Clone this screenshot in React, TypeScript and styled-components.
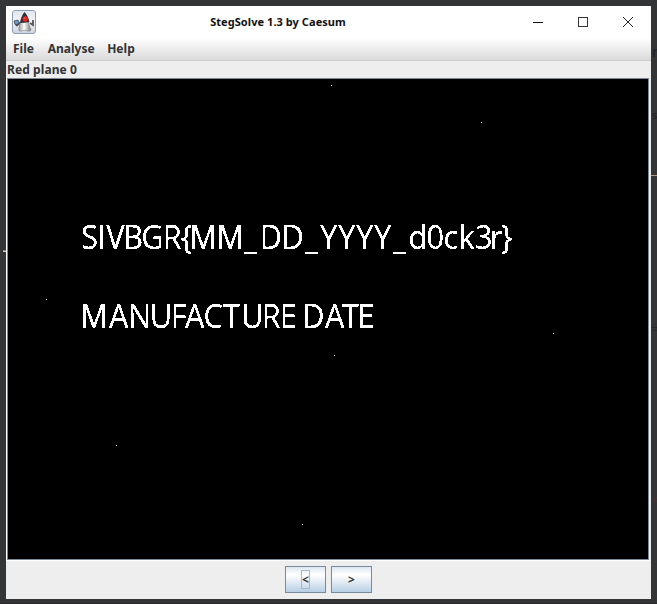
import React from "react";
import styled, { createGlobalStyle } from "styled-components";

const GlobalStyle = createGlobalStyle`
  body { margin: 0; background: #343537; }
  * { box-sizing: border-box; }
`;

const Desktop = styled.div`
  position: relative;
  width: 657px;
  height: 604px;
  padding: 6px 6px 5px;
  overflow: hidden;
  background: linear-gradient(#343537 0 603px, #29292c 603px);
`;

const BackdropMark = styled.span<{ $x: number; $y: number; $w: number; $color: string }>`
  position: absolute;
  left: ${(p) => p.$x}px;
  top: ${(p) => p.$y}px;
  width: ${(p) => p.$w}px;
  height: 1px;
  background: ${(p) => p.$color};
`;

const BackdropText = styled.span<{ $y: number; $size: number; $color: string }>`
  position: absolute;
  left: 652px;
  top: ${(p) => p.$y}px;
  font: ${(p) => p.$size}px/1 "Noto Sans", sans-serif;
  color: ${(p) => p.$color};
`;

const Window = styled.div`
  display: flex;
  flex-direction: column;
  width: 645px;
  height: 593px;
  background: #eee;
  font-family: "Noto Sans", sans-serif;
`;

const TitleBar = styled.header`
  display: grid;
  grid-template-columns: 24px 1fr 136px;
  align-items: center;
  height: 32px;
  padding-left: 6px;
  background: #fff;
`;

const Title = styled.h1`
  margin: 0;
  padding-left: 5px;
  text-align: center;
  font: 700 11px/16px "Noto Sans", sans-serif;
  letter-spacing: 0.06px;
  color: #111;
  white-space: nowrap;
`;

const WindowControls = styled.div`
  display: flex;
`;

const ControlButton = styled.button`
  display: grid;
  place-items: center;
  width: 45px;
  height: 30px;
  padding: 0;
  border: 0;
  background: none;
`;

const MenuBar = styled.nav`
  display: flex;
  gap: 12.4px;
  height: 23px;
  padding: 2px 7px 0;
  border-bottom: 1px solid #ccc;
  background: linear-gradient(#fff, #dadada);
`;

const MenuItem = styled.span`
  font: 700 12px/17px "Noto Sans", sans-serif;
  letter-spacing: 0.03px;
  color: #333;
  &:first-child { margin-right: 1.2px; }
`;

const PlaneLabel = styled.div`
  height: 17px;
  padding-left: 1px;
  font: 700 12px/17px "Noto Sans", sans-serif;
  letter-spacing: 0.08px;
  color: #333;
`;

const ImagePane = styled.div`
  width: 644px;
  height: 483px;
  padding-left: 1px;
  border-right: 1px solid #eee;
  border-bottom: 1px solid #fff;
  background: #fff;
`;

const ImageView = styled.div`
  width: 642px;
  height: 482px;
  border: 1px solid #7a8a99;
  background: #000;
  svg { display: block; }
`;

const Footer = styled.footer`
  display: flex;
  flex: 1;
  justify-content: center;
  align-items: flex-start;
  gap: 5px;
  padding-top: 5px;
`;

const StepButton = styled.button`
  display: grid;
  place-items: center;
  width: 41px;
  height: 27px;
  padding: 0;
  border: 1px solid #7a8a99;
  background: linear-gradient(#dde8f3 0%, #fff 32%, #b8cfe5 100%);
  font: 700 12px/17px "Noto Sans", sans-serif;
  color: #333;
`;

const StepGlyph = styled.span<{ $focused?: boolean }>`
  display: grid;
  place-items: center;
  width: 9px;
  height: 19px;
  border: 1px solid ${(p) => (p.$focused ? "#a3b8cc" : "transparent")};
`;

const CONDENSE = 0.96;

const LINES = [
  {
    text: "SIVBGR{MM_DD_YYYY_d0ck3r}",
    y: 249,
    x: [81.2, 97.5, 106.3, 123.3, 141.2, 162.8, 180.8, 189.5, 216.6, 243.8, 259.8, 281.5, 304.7, 320.3, 338.3, 356.3, 374.3, 392.7, 408.6, 426.4, 443.6, 458.7, 475, 490, 501],
  },
  {
    text: "MANUFACTURE DATE",
    y: 328,
    x: [80.2, 109, 128, 149.8, 170.8, 185, 203.5, 222.7, 241, 261.8, 279.8, 294, 302.3, 325, 341.7, 357.5],
  },
];

const SPECKS = [[331, 85], [481, 122], [46, 299], [553, 333], [334, 355], [116, 445], [302, 524]];

function DukeIcon() {
  return (
    <svg width="24" height="24" viewBox="0 0 24 24" aria-hidden="true">
      <defs>
        <linearGradient id="tile" x2="0" y2="1">
          <stop stopColor="#dfe6ee" />
          <stop offset=".5" stopColor="#f4f5f7" />
          <stop offset="1" stopColor="#ccd2dc" />
        </linearGradient>
        <linearGradient id="belly">
          <stop stopColor="#999" />
          <stop offset=".45" stopColor="#fff" />
          <stop offset="1" stopColor="#777" />
        </linearGradient>
      </defs>
      <rect x=".5" y=".5" width="23" height="23" rx="2.5" fill="url(#tile)" stroke="#8ba0b7" />
      <path d="M8 13L5 15.5 3 13M18 13L21 15 21 10" fill="none" stroke="#555" strokeWidth="1.8" />
      <path d="M2 11l4-1 1.5 3-4 2z" fill="#6b9cc8" stroke="#333" strokeWidth=".7" />
      <path d="M9 11C8 15 6 18 7 20.5q2 1.5 4 0 2-1 4 .3 3 1 4-.8-1.5-4-3-9z" fill="url(#belly)" stroke="#777" strokeWidth=".5" />
      <path d="M12.5 2Q16 5.5 17.5 12 13 13 8 13 9 6 12.5 2z" fill="#303030" />
      <circle cx="13.2" cy="9" r="2.8" fill="#e22125" />
      <circle cx="12.6" cy="8.2" r=".9" fill="#ff5550" />
    </svg>
  );
}

function PlaneImage() {
  return (
    <svg width="640" height="480" viewBox="8 79 640 480">
      <defs>
        <filter id="one-bit" x="0" y="0" width="100%" height="100%" colorInterpolationFilters="sRGB">
          <feComponentTransfer>
            <feFuncA type="discrete" tableValues="0 0 1 1 1" />
          </feComponentTransfer>
        </filter>
      </defs>
      <g fill="#fff" filter="url(#one-bit)" fontFamily='"Open Sans", sans-serif' fontSize="32">
        <rect x="8" y="79" width="640" height="480" fill="none" />
        {LINES.map((line) => (
          <text
            key={line.y}
            transform={`scale(${CONDENSE} 1)`}
            x={line.x.map((x) => (x / CONDENSE).toFixed(2)).join(" ")}
            y={line.y}
          >
            {line.text}
          </text>
        ))}
      </g>
      <g fill="#fff" shapeRendering="crispEdges">
        {SPECKS.map(([x, y]) => <rect key={x} x={x} y={y} width="1" height="1" />)}
      </g>
    </svg>
  );
}

export default function App() {
  return (
    <Desktop>
      <GlobalStyle />
      <BackdropMark $x={3} $y={250} $w={3} $color="#888" />
      <BackdropMark $x={3} $y={251} $w={3} $color="#ccc" />
      <BackdropMark $x={651} $y={175} $w={6} $color="#b99582" />
      <BackdropMark $x={651} $y={327} $w={6} $color="#242628" />
      <BackdropMark $x={651} $y={330} $w={6} $color="#292b2d" />
      <BackdropText $y={44} $size={15} $color="#202124">r</BackdropText>
      <BackdropText $y={109} $size={11} $color="#202124">s</BackdropText>
      <BackdropText $y={494} $size={9} $color="#562d30">x</BackdropText>
      <Window>
        <TitleBar>
          <DukeIcon />
          <Title>StegSolve 1.3 by Caesum</Title>
          <WindowControls>
            <ControlButton aria-label="Minimize">
              <svg width="10" height="10" shapeRendering="crispEdges"><path d="M0 5.5h10" stroke="#111" /></svg>
            </ControlButton>
            <ControlButton aria-label="Maximize">
              <svg width="10" height="10" shapeRendering="crispEdges"><rect x=".5" y=".5" width="9" height="9" fill="none" stroke="#333" /></svg>
            </ControlButton>
            <ControlButton aria-label="Close">
              <svg width="10" height="10"><path d="M0 0L10 10M10 0L0 10" stroke="#222" /></svg>
            </ControlButton>
          </WindowControls>
        </TitleBar>
        <MenuBar>
          <MenuItem>File</MenuItem>
          <MenuItem>Analyse</MenuItem>
          <MenuItem>Help</MenuItem>
        </MenuBar>
        <PlaneLabel>Red plane 0</PlaneLabel>
        <ImagePane>
          <ImageView><PlaneImage /></ImageView>
        </ImagePane>
        <Footer>
          <StepButton><StepGlyph $focused>&lt;</StepGlyph></StepButton>
          <StepButton><StepGlyph>&gt;</StepGlyph></StepButton>
        </Footer>
      </Window>
    </Desktop>
  );
}
